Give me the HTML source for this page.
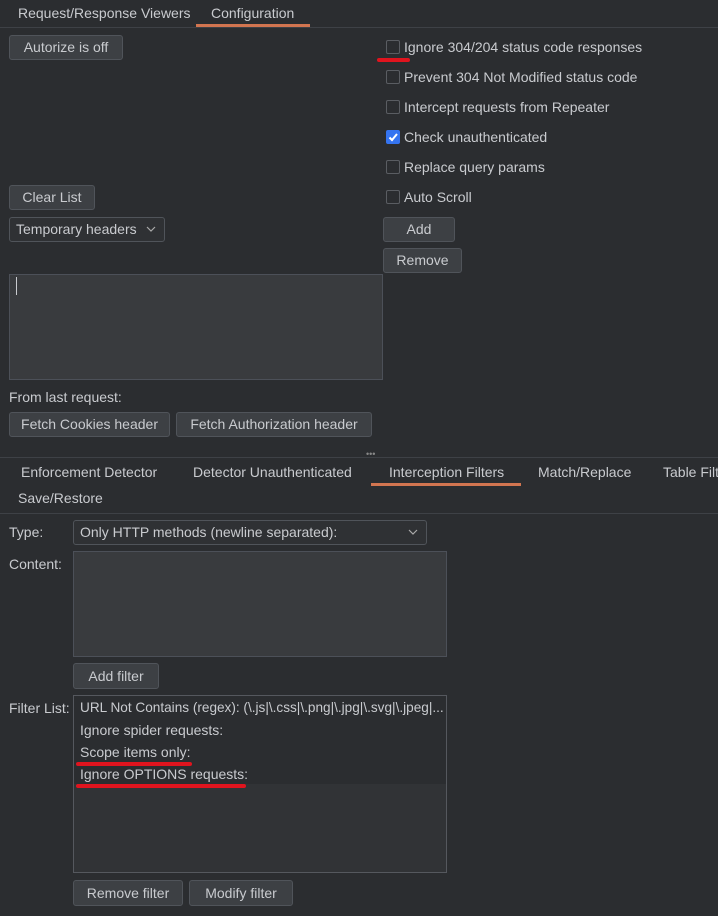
<!DOCTYPE html>
<html><head><meta charset="utf-8"><style>
*{box-sizing:border-box;margin:0;padding:0}
body{width:718px;height:916px;background:#2b2d30;font-family:"Liberation Sans",sans-serif;font-size:14px;color:#c9cbcf;position:relative;overflow:hidden}
.a{position:absolute;white-space:nowrap}
.btn{position:absolute;background:#3d4044;border:1px solid #50545a;border-radius:3px;color:#c9cbcf;text-align:center;font-size:14px}
.cb{position:absolute;width:14px;height:14px;border:1px solid #5a5d62;border-radius:2px;background:#2b2d30}
.line{position:absolute;height:1px;background:#3e4146}
.red{position:absolute;height:4px;background:#e0141e;border-radius:2px}
.ta{position:absolute;background:#393b3e;border:1px solid #4c5058}
.chev{position:absolute;right:8px;top:8px}
</style></head><body>
<div class="a" style="left:18px;top:5px">Request/Response Viewers</div>
<div class="a" style="left:211px;top:5px">Configuration</div>
<div class="a" style="left:196px;top:24px;width:114px;height:3px;background:#d27550"></div>
<div class="line" style="left:0;top:27px;width:718px"></div>

<div class="btn" style="left:9px;top:35px;width:114px;height:25px;line-height:23px">Autorize is off</div>
<div class="btn" style="left:9px;top:185px;width:86px;height:25px;line-height:23px">Clear List</div>
<div class="btn" style="left:9px;top:217px;width:156px;height:25px;line-height:23px;text-align:left;padding-left:6px;background:#2f3134">Temporary headers<svg class="chev" width="10" height="7"><path d="M1 1 L5 5 L9 1" stroke="#aaa" stroke-width="1.2" fill="none"/></svg></div>

<div class="cb" style="left:386px;top:40px"></div><div class="a" style="left:404px;top:39px">Ignore 304/204 status code responses</div>
<div class="red" style="left:377px;top:58px;width:33px"></div>
<div class="cb" style="left:386px;top:70px"></div><div class="a" style="left:404px;top:69px">Prevent 304 Not Modified status code</div>
<div class="cb" style="left:386px;top:100px"></div><div class="a" style="left:404px;top:99px">Intercept requests from Repeater</div>
<div class="cb" style="left:386px;top:130px;background:#3574f0;border-color:#3574f0"><svg width="12" height="12" style="position:absolute;left:0;top:0"><path d="M2.5 6.5 L5 9 L10 3" stroke="#fff" stroke-width="2" fill="none"/></svg></div><div class="a" style="left:404px;top:129px">Check unauthenticated</div>
<div class="cb" style="left:386px;top:160px"></div><div class="a" style="left:404px;top:159px">Replace query params</div>
<div class="cb" style="left:386px;top:190px"></div><div class="a" style="left:404px;top:189px">Auto Scroll</div>
<div class="btn" style="left:383px;top:217px;width:72px;height:25px;line-height:23px">Add</div>
<div class="btn" style="left:383px;top:248px;width:79px;height:25px;line-height:23px">Remove</div>

<div class="ta" style="left:9px;top:274px;width:374px;height:106px"></div>
<div class="a" style="left:16px;top:277px;width:1px;height:18px;background:#c9cbcf"></div>
<div class="a" style="left:9px;top:389px">From last request:</div>
<div class="btn" style="left:9px;top:412px;width:161px;height:25px;line-height:23px">Fetch Cookies header</div>
<div class="btn" style="left:176px;top:412px;width:196px;height:25px;line-height:23px">Fetch Authorization header</div>

<div class="line" style="left:0;top:457px;width:718px"></div>
<div class="a" style="left:366px;top:449px;font-size:9px;color:#888">•••</div>
<div class="a" style="left:21px;top:464px">Enforcement Detector</div>
<div class="a" style="left:193px;top:464px">Detector Unauthenticated</div>
<div class="a" style="left:389px;top:464px">Interception Filters</div>
<div class="a" style="left:371px;top:483px;width:150px;height:3px;background:#d27550"></div>
<div class="a" style="left:538px;top:464px">Match/Replace</div>
<div class="a" style="left:663px;top:464px">Table Filters</div>
<div class="a" style="left:18px;top:490px">Save/Restore</div>
<div class="line" style="left:0;top:513px;width:718px"></div>

<div class="a" style="left:9px;top:524px">Type:</div>
<div class="btn" style="left:73px;top:520px;width:354px;height:25px;line-height:23px;text-align:left;padding-left:6px;background:#2f3134">Only HTTP methods (newline separated):<svg class="chev" width="10" height="7"><path d="M1 1 L5 5 L9 1" stroke="#aaa" stroke-width="1.2" fill="none"/></svg></div>
<div class="a" style="left:9px;top:556px">Content:</div>
<div class="ta" style="left:73px;top:551px;width:374px;height:106px"></div>
<div class="btn" style="left:73px;top:663px;width:86px;height:26px;line-height:24px">Add filter</div>

<div class="a" style="left:9px;top:700px">Filter List:</div>
<div class="a" style="left:73px;top:695px;width:374px;height:178px;background:#313336;border:1px solid #55585e"></div>
<div class="a" style="left:74px;top:696px;width:372px;height:88px;background:#2b2d30"></div>
<div class="a" style="left:80px;top:700px;font-size:13.6px">URL Not Contains (regex): (\.js|\.css|\.png|\.jpg|\.svg|\.jpeg|...</div>
<div class="a" style="left:80px;top:722px">Ignore spider requests:</div>
<div class="a" style="left:80px;top:744px">Scope items only:</div>
<div class="red" style="left:76px;top:762px;width:116px"></div>
<div class="a" style="left:80px;top:766px">Ignore OPTIONS requests:</div>
<div class="red" style="left:76px;top:784px;width:170px"></div>
<div class="btn" style="left:73px;top:880px;width:110px;height:26px;line-height:24px">Remove filter</div>
<div class="btn" style="left:189px;top:880px;width:104px;height:26px;line-height:24px">Modify filter</div>
</body></html>
